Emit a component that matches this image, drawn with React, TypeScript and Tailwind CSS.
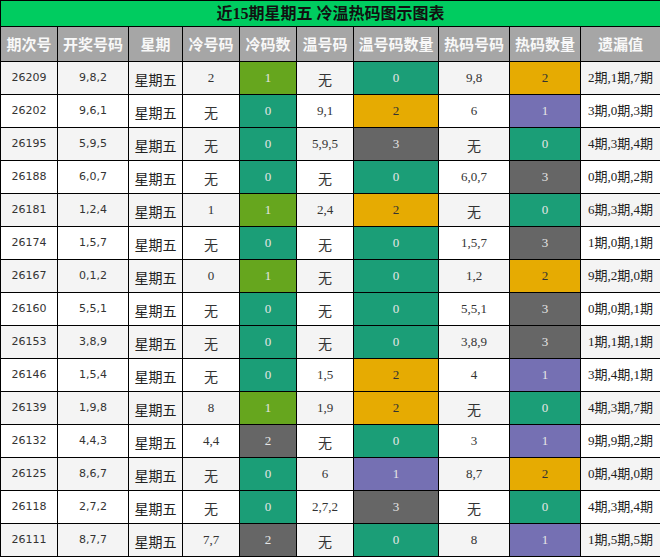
type Cell = { v: string; c?: string };

const COLORS: Record<string, string> = {
  g: "bg-[#66a61e] text-[#e6e6e6]",
  t: "bg-[#1b9e77] text-[#e6e6e6]",
  d: "bg-[#666666] text-[#e6e6e6]",
  y: "bg-[#e6ab02] text-[#333333]",
  p: "bg-[#7570b3] text-[#e6e6e6]",
};

// 期次, 开奖, 冷号码, 冷码数(color), 温号码, 温数量(color), 热号码, 热数量(color), 遗漏
const rows: [string, string, string, Cell, string, Cell, string, Cell, string][] = [
  ["26209", "9,8,2", "2", { v: "1", c: "g" }, "无", { v: "0", c: "t" }, "9,8", { v: "2", c: "y" }, "2期,1期,7期"],
  ["26202", "9,6,1", "无", { v: "0", c: "t" }, "9,1", { v: "2", c: "y" }, "6", { v: "1", c: "p" }, "3期,0期,3期"],
  ["26195", "5,9,5", "无", { v: "0", c: "t" }, "5,9,5", { v: "3", c: "d" }, "无", { v: "0", c: "t" }, "4期,3期,4期"],
  ["26188", "6,0,7", "无", { v: "0", c: "t" }, "无", { v: "0", c: "t" }, "6,0,7", { v: "3", c: "d" }, "0期,0期,2期"],
  ["26181", "1,2,4", "1", { v: "1", c: "g" }, "2,4", { v: "2", c: "y" }, "无", { v: "0", c: "t" }, "6期,3期,4期"],
  ["26174", "1,5,7", "无", { v: "0", c: "t" }, "无", { v: "0", c: "t" }, "1,5,7", { v: "3", c: "d" }, "1期,0期,1期"],
  ["26167", "0,1,2", "0", { v: "1", c: "g" }, "无", { v: "0", c: "t" }, "1,2", { v: "2", c: "y" }, "9期,2期,0期"],
  ["26160", "5,5,1", "无", { v: "0", c: "t" }, "无", { v: "0", c: "t" }, "5,5,1", { v: "3", c: "d" }, "0期,0期,1期"],
  ["26153", "3,8,9", "无", { v: "0", c: "t" }, "无", { v: "0", c: "t" }, "3,8,9", { v: "3", c: "d" }, "1期,1期,1期"],
  ["26146", "1,5,4", "无", { v: "0", c: "t" }, "1,5", { v: "2", c: "y" }, "4", { v: "1", c: "p" }, "3期,4期,1期"],
  ["26139", "1,9,8", "8", { v: "1", c: "g" }, "1,9", { v: "2", c: "y" }, "无", { v: "0", c: "t" }, "4期,3期,7期"],
  ["26132", "4,4,3", "4,4", { v: "2", c: "d" }, "无", { v: "0", c: "t" }, "3", { v: "1", c: "p" }, "9期,9期,2期"],
  ["26125", "8,6,7", "无", { v: "0", c: "t" }, "6", { v: "1", c: "p" }, "8,7", { v: "2", c: "y" }, "0期,4期,0期"],
  ["26118", "2,7,2", "无", { v: "0", c: "t" }, "2,7,2", { v: "3", c: "d" }, "无", { v: "0", c: "t" }, "4期,3期,4期"],
  ["26111", "8,7,7", "7,7", { v: "2", c: "d" }, "无", { v: "0", c: "t" }, "8", { v: "1", c: "p" }, "1期,5期,5期"],
];

const headers = ["期次号", "开奖号码", "星期", "冷号码", "冷码数", "温号码", "温号码数量", "热码号码", "热码数量", "遗漏值"];
const widths = [57, 71, 54, 57, 57, 57, 85, 71, 71, 80];

const sans = "font-['DejaVu_Sans',sans-serif] text-[11px]";
const serif = "font-['Liberation_Serif','Noto_Sans_CJK_SC',serif] text-[13px]";
const cjk = "font-['Noto_Sans_CJK_SC',sans-serif] text-[14px] pt-[3px]";

function Plain({ v, kind }: { v: string; kind: "sans" | "serif" }) {
  const f = v === "无" ? cjk : kind === "sans" ? sans : serif;
  return <td className={`border border-black text-center text-[#333] ${f}`}>{v}</td>;
}

function Colored({ cell }: { cell: Cell }) {
  return (
    <td className={`border border-black text-center ${serif} ${COLORS[cell.c ?? "t"]}`}>{cell.v}</td>
  );
}

export default function App() {
  return (
    <div className="w-[660px] h-[557px] bg-white">
      <table className="table-fixed border-collapse w-[660px]">
        <colgroup>
          {widths.map((w, i) => (
            <col key={i} style={{ width: w }} />
          ))}
        </colgroup>
        <thead>
          <tr className="h-[26px]">
            <th
              colSpan={10}
              className="border border-black bg-[#00cc60] text-center text-[16px] font-bold text-[#111] font-['Liberation_Serif','Noto_Sans_CJK_SC',serif] leading-[24px]"
            >
              近15期星期五 冷温热码图示图表
            </th>
          </tr>
          <tr className="h-[35px]">
            {headers.map((h) => (
              <th
                key={h}
                className="border border-black bg-[#a6a6a6] text-center text-[#f8f8f8] text-[15px] font-bold font-['Noto_Sans_CJK_SC',sans-serif]"
              >
                {h}
              </th>
            ))}
          </tr>
        </thead>
        <tbody>
          {rows.map((r, i) => (
            <tr key={r[0]} className={`h-[33px] ${i % 2 === 0 ? "bg-[#f4f4f4]" : "bg-white"}`}>
              <Plain v={r[0]} kind="sans" />
              <Plain v={r[1]} kind="sans" />
              <td className={`border border-black text-center text-[#222] ${cjk}`}>星期五</td>
              <Plain v={r[2]} kind="serif" />
              <Colored cell={r[3]} />
              <Plain v={r[4]} kind="serif" />
              <Colored cell={r[5]} />
              <Plain v={r[6]} kind="serif" />
              <Colored cell={r[7]} />
              <td className={`border border-black text-center text-[#222] ${serif} whitespace-nowrap`}>{r[8]}</td>
            </tr>
          ))}
        </tbody>
      </table>
    </div>
  );
}
